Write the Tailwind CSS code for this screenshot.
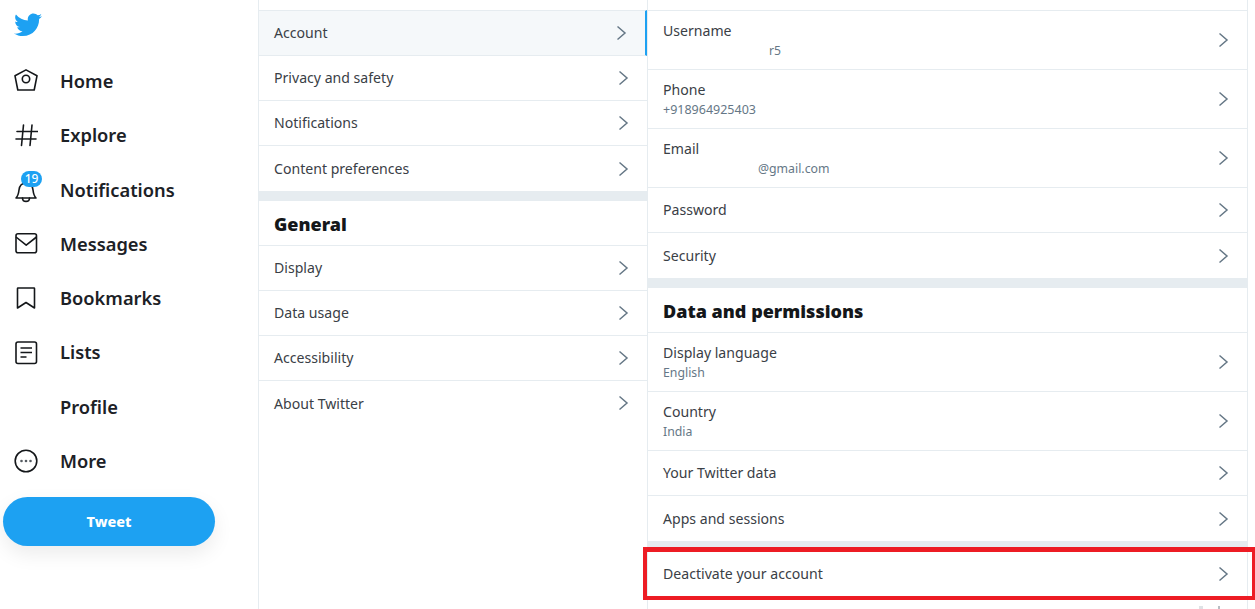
<!DOCTYPE html>
<html lang="en">
<head>
    <meta charset="UTF-8">
    <title>Settings</title>
    <script src="https://cdn.jsdelivr.net/npm/@tailwindcss/browser@4"></script>
</head>
<body class="bg-white h-[609px] overflow-hidden font-['Noto_Sans',sans-serif] text-[#14171a]">
<div class="flex h-[609px]">
    <!-- Sidebar -->
    <nav class="w-[259px] shrink-0 border-r border-[#e6ecf0] relative">
        <svg class="absolute left-[14px] top-[13px] w-[28px] h-[24px]" viewBox="0 0 24 20" fill="#1da1f2"><path d="M24 2.4c-.9.4-1.8.7-2.8.8 1-.6 1.8-1.6 2.2-2.7-1 .6-2 1-3.100 1.200C19.300.7 18 .1 16.700.1c-2.700 0-4.900 2.200-4.900 4.900 0 .4 0 .8.100 1.100C7.800 5.900 4.200 4 1.700.9 1.200 1.600 1 2.500 1 3.400c0 1.700.9 3.200 2.200 4.100-.8 0-1.600-.2-2.200-.6v.1c0 2.400 1.700 4.400 3.900 4.800-.4.100-.8.200-1.300.2-.3 0-.6 0-.9-.1.600 2 2.400 3.400 4.600 3.400-1.700 1.300-3.800 2.100-6.100 2.100-.4 0-.8 0-1.200-.1 2.200 1.400 4.800 2.200 7.500 2.200 9.100 0 14-7.500 14-14v-.6c1-.7 1.800-1.600 2.500-2.500z"/></svg>
        <ul class="pt-[54px] text-[18.300px] font-semibold text-[#1c2126] leading-[54.3px]">
            <li class="flex items-center h-[54.3px]">
                <svg class="ml-[14px] w-[24px] h-[24px]" viewBox="0 0 24 24" fill="none" stroke="#14171a" stroke-width="1.600" stroke-linejoin="round"><path d="M12 .9 1 6.800 3.800 21h16.400L23 6.800z"/><circle cx="12" cy="10" r="3.700"/></svg>
                <span class="ml-[22px]">Home</span>
            </li>
            <li class="flex items-center h-[54.3px]">
                <svg class="ml-[14px] w-[24px] h-[24px]" viewBox="0 0 24 24" fill="none" stroke="#14171a" stroke-width="1.600" stroke-linecap="round"><path d="M9.500 2 7.500 22.500M18 2l-2 20.500M3 8.500h21M2 16h20"/></svg>
                <span class="ml-[22px]">Explore</span>
            </li>
            <li class="flex items-center h-[54.3px] relative">
                <svg class="ml-[14px] w-[24px] h-[24px] mt-[2px]" viewBox="0 0 24 24" fill="none" stroke="#14171a" stroke-width="1.600" stroke-linecap="round" stroke-linejoin="round"><path d="M2 19c2-2 2.500-4 3-8 .5-4 3-7 7-7s6.500 3 7 7c.5 4 1 6 3 8z"/><path d="M8.500 19c0 4.500 7 4.500 7 0"/></svg>
                <span class="ml-[22px]">Notifications</span>
                <span class="absolute left-[21px] top-[8px] w-[21px] h-[16px] rounded-full bg-[#1da1f2] text-white text-[12px] font-medium leading-[16px] text-center">19</span>
            </li>
            <li class="flex items-center h-[54.3px]">
                <svg class="ml-[14px] w-[24px] h-[24px]" viewBox="0 0 24 24" fill="none" stroke="#14171a" stroke-width="1.600" stroke-linejoin="round"><rect x="2" y="1.800" width="20.500" height="19" rx="2"/><path d="M2 5l10.200 8.200L22.500 5"/></svg>
                <span class="ml-[22px]">Messages</span>
            </li>
            <li class="flex items-center h-[54.3px]">
                <svg class="ml-[14px] w-[24px] h-[24px]" viewBox="0 0 24 24" fill="none" stroke="#14171a" stroke-width="1.600" stroke-linejoin="round"><path d="M4 2h16c.3 0 .5.200.5.500V22L12 16.500 3.500 22V2.500c0-.3.200-.5.500-.5z"/></svg>
                <span class="ml-[22px]">Bookmarks</span>
            </li>
            <li class="flex items-center h-[54.3px]">
                <svg class="ml-[14px] w-[24px] h-[24px]" viewBox="0 0 24 24" fill="none" stroke="#14171a" stroke-width="1.600" stroke-linejoin="round"><rect x="2" y="1" width="20.500" height="21.500" rx="2"/><path d="M6.500 7h11.500M6.500 11.500h11.500M6.500 16h6"/></svg>
                <span class="ml-[22px]">Lists</span>
            </li>
            <li class="flex items-center h-[54.3px]">
                <span class="ml-[60px]">Profile</span>
            </li>
            <li class="flex items-center h-[54.3px]">
                <svg class="ml-[14px] w-[24px] h-[24px]" viewBox="0 0 24 24" fill="none" stroke="#14171a" stroke-width="1.600"><circle cx="12" cy="12" r="10.800"/><circle cx="7.500" cy="12" r="1.300" fill="#555b61" stroke="none"/><circle cx="12" cy="12" r="1.300" fill="#555b61" stroke="none"/><circle cx="16.500" cy="12" r="1.300" fill="#555b61" stroke="none"/></svg>
                <span class="ml-[22px]">More</span>
            </li>
        </ul>
        <button class="ml-[3px] mt-[9px] w-[212px] h-[49px] rounded-full bg-[#1da1f2] text-white text-[14.500px] font-extrabold shadow-[0_8px_20px_rgba(0,0,0,0.08)]">Tweet</button>
    </nav>

    <!-- Settings list -->
    <div class="w-[389px] shrink-0 pt-[10px] border-r border-[#e6ecf0] text-[14.100px] text-[#3a4046]">
        <div class="flex justify-between items-center h-[46px] border-y border-[#e6ecf0] bg-[#f5f8fa] border-r-2 border-r-[#1da1f2] pl-[15px] pr-[16px]">
            <span>Account</span>
            <svg class="w-[16px] h-[16px]" viewBox="0 0 16 16" fill="none" stroke="#657786" stroke-width="1.500"><path d="M4.500 1.500 12 8l-7.500 6.500"/></svg>
        </div>
        <div class="flex justify-between items-center h-[45px] border-b border-[#e6ecf0] pl-[15px] pr-[16px]">
            <span>Privacy and safety</span>
            <svg class="w-[16px] h-[16px]" viewBox="0 0 16 16" fill="none" stroke="#657786" stroke-width="1.500"><path d="M4.500 1.500 12 8l-7.500 6.500"/></svg>
        </div>
        <div class="flex justify-between items-center h-[45px] border-b border-[#e6ecf0] pl-[15px] pr-[16px]">
            <span>Notifications</span>
            <svg class="w-[16px] h-[16px]" viewBox="0 0 16 16" fill="none" stroke="#657786" stroke-width="1.500"><path d="M4.500 1.500 12 8l-7.500 6.500"/></svg>
        </div>
        <div class="flex justify-between items-center h-[45px] pl-[15px] pr-[16px]">
            <span>Content preferences</span>
            <svg class="w-[16px] h-[16px]" viewBox="0 0 16 16" fill="none" stroke="#657786" stroke-width="1.500"><path d="M4.500 1.500 12 8l-7.500 6.500"/></svg>
        </div>
        <div class="h-[10px] bg-[#e6ecf0]"></div>
        <h2 class="flex items-center h-[45px] pt-[2px] border-b border-[#e6ecf0] pl-[15px] text-[18px] font-black text-[#14171a]">General</h2>
        <div class="flex justify-between items-center h-[45px] border-b border-[#e6ecf0] pl-[15px] pr-[16px]">
            <span>Display</span>
            <svg class="w-[16px] h-[16px]" viewBox="0 0 16 16" fill="none" stroke="#657786" stroke-width="1.500"><path d="M4.500 1.500 12 8l-7.500 6.500"/></svg>
        </div>
        <div class="flex justify-between items-center h-[45px] border-b border-[#e6ecf0] pl-[15px] pr-[16px]">
            <span>Data usage</span>
            <svg class="w-[16px] h-[16px]" viewBox="0 0 16 16" fill="none" stroke="#657786" stroke-width="1.500"><path d="M4.500 1.500 12 8l-7.500 6.500"/></svg>
        </div>
        <div class="flex justify-between items-center h-[45px] border-b border-[#e6ecf0] pl-[15px] pr-[16px]">
            <span>Accessibility</span>
            <svg class="w-[16px] h-[16px]" viewBox="0 0 16 16" fill="none" stroke="#657786" stroke-width="1.500"><path d="M4.500 1.500 12 8l-7.500 6.500"/></svg>
        </div>
        <div class="flex justify-between items-center h-[45px] pl-[15px] pr-[16px]">
            <span>About Twitter</span>
            <svg class="w-[16px] h-[16px] -mt-[2px]" viewBox="0 0 16 16" fill="none" stroke="#657786" stroke-width="1.500"><path d="M4.500 1.500 12 8l-7.500 6.500"/></svg>
        </div>
    </div>

    <!-- Account details -->
    <div class="w-[600px] shrink-0 pt-[10px] border-r border-[#e6ecf0] text-[14.100px] text-[#3a4046] relative">
        <div class="flex justify-between items-center h-[60px] border-y border-[#e6ecf0] pl-[15px] pr-[16px]">
            <div>
                <div class="mt-[1px]">Username</div>
                <div class="pl-[106px] mt-[1px] text-[12.200px] text-[#657786]">r5</div>
            </div>
            <svg class="w-[16px] h-[16px]" viewBox="0 0 16 16" fill="none" stroke="#657786" stroke-width="1.500"><path d="M4.500 1.500 12 8l-7.500 6.500"/></svg>
        </div>
        <div class="flex justify-between items-center h-[59px] border-b border-[#e6ecf0] pl-[15px] pr-[16px]">
            <div>
                <div class="mt-[1px]">Phone</div>
                <div class="mt-[1px] text-[12.500px] text-[#657786]">+918964925403</div>
            </div>
            <svg class="w-[16px] h-[16px]" viewBox="0 0 16 16" fill="none" stroke="#657786" stroke-width="1.500"><path d="M4.500 1.500 12 8l-7.500 6.500"/></svg>
        </div>
        <div class="flex justify-between items-center h-[59px] border-b border-[#e6ecf0] pl-[15px] pr-[16px]">
            <div>
                <div class="mt-[1px]">Email</div>
                <div class="pl-[95px] mt-[1px] text-[12.300px] text-[#657786]">@gmail.com</div>
            </div>
            <svg class="w-[16px] h-[16px]" viewBox="0 0 16 16" fill="none" stroke="#657786" stroke-width="1.500"><path d="M4.500 1.500 12 8l-7.500 6.500"/></svg>
        </div>
        <div class="flex justify-between items-center h-[45px] border-b border-[#e6ecf0] pl-[15px] pr-[16px]">
            <span>Password</span>
            <svg class="w-[16px] h-[16px]" viewBox="0 0 16 16" fill="none" stroke="#657786" stroke-width="1.500"><path d="M4.500 1.500 12 8l-7.500 6.500"/></svg>
        </div>
        <div class="flex justify-between items-center h-[45px] pl-[15px] pr-[16px]">
            <span>Security</span>
            <svg class="w-[16px] h-[16px]" viewBox="0 0 16 16" fill="none" stroke="#657786" stroke-width="1.500"><path d="M4.500 1.500 12 8l-7.500 6.500"/></svg>
        </div>
        <div class="h-[10px] bg-[#e6ecf0]"></div>
        <h2 class="flex items-center h-[45px] pt-[2px] border-b border-[#e6ecf0] pl-[15px] text-[18px] font-black text-[#14171a]">Data and permissions</h2>
        <div class="flex justify-between items-center h-[59px] border-b border-[#e6ecf0] pl-[15px] pr-[16px]">
            <div>
                <div class="mt-[1px]">Display language</div>
                <div class="mt-[1px] text-[12.300px] text-[#657786]">English</div>
            </div>
            <svg class="w-[16px] h-[16px]" viewBox="0 0 16 16" fill="none" stroke="#657786" stroke-width="1.500"><path d="M4.500 1.500 12 8l-7.500 6.500"/></svg>
        </div>
        <div class="flex justify-between items-center h-[59px] border-b border-[#e6ecf0] pl-[15px] pr-[16px]">
            <div>
                <div class="mt-[1px]">Country</div>
                <div class="mt-[1px] text-[12.300px] text-[#657786]">India</div>
            </div>
            <svg class="w-[16px] h-[16px]" viewBox="0 0 16 16" fill="none" stroke="#657786" stroke-width="1.500"><path d="M4.500 1.500 12 8l-7.500 6.500"/></svg>
        </div>
        <div class="flex justify-between items-center h-[45px] border-b border-[#e6ecf0] pl-[15px] pr-[16px]">
            <span>Your Twitter data</span>
            <svg class="w-[16px] h-[16px]" viewBox="0 0 16 16" fill="none" stroke="#657786" stroke-width="1.500"><path d="M4.500 1.500 12 8l-7.500 6.500"/></svg>
        </div>
        <div class="flex justify-between items-center h-[45px] pl-[15px] pr-[16px]">
            <span>Apps and sessions</span>
            <svg class="w-[16px] h-[16px]" viewBox="0 0 16 16" fill="none" stroke="#657786" stroke-width="1.500"><path d="M4.500 1.500 12 8l-7.500 6.500"/></svg>
        </div>
        <div class="h-[10px] bg-[#e6ecf0]"></div>
        <div class="flex justify-between items-center h-[45px] pl-[15px] pr-[16px]">
            <span>Deactivate your account</span>
            <svg class="w-[16px] h-[16px]" viewBox="0 0 16 16" fill="none" stroke="#657786" stroke-width="1.500"><path d="M4.500 1.500 12 8l-7.500 6.500"/></svg>
        </div>
        <!-- red highlight drawn over the last row -->
        <div class="absolute left-[-5px] top-[547px] w-[612px] h-[53px] border-t-[5px] border-b-[4px] border-l-[4px] border-r-[3px] border-[#ed1c24]"></div>
        <!-- tops of the letters cut off by the bottom edge -->
        <div class="absolute left-[551px] top-[606px] w-[4px] h-[3px] bg-[#dfe3e6]"></div>
        <div class="absolute left-[570px] top-[606px] w-[2px] h-[3px] bg-[#b8bec4]"></div>
    </div>
</div>
</body>
</html>
